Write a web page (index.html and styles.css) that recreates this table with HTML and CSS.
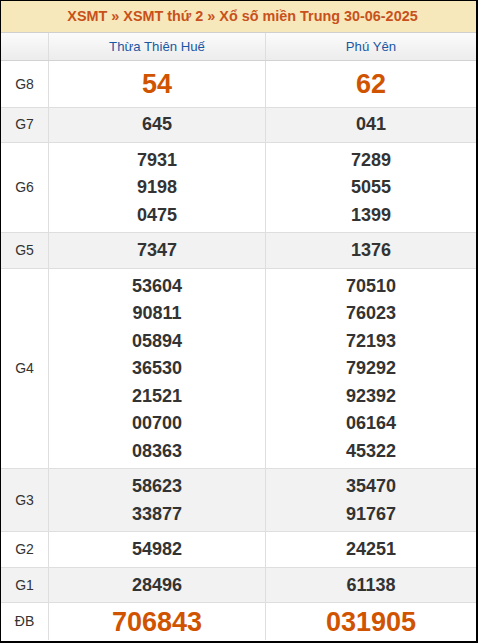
FILE: index.html
```html
<!DOCTYPE html>
<html lang="vi">
<head>
<meta charset="utf-8">
<title>XSMT 30-06-2025</title>
<link rel="stylesheet" href="styles.css">
</head>
<body>
<div class="wrap">
  <div class="title">XSMT » XSMT thứ 2 » Xổ số miền Trung 30-06-2025</div>
  <table class="kq">
    <thead>
      <tr><th class="lbl"></th><th>Thừa Thiên Huế</th><th>Phú Yên</th></tr>
    </thead>
    <tbody>
      <tr class="g8"><td class="lbl">G8</td><td class="big">54</td><td class="big">62</td></tr>
      <tr class="alt g7"><td class="lbl">G7</td><td>645</td><td>041</td></tr>
      <tr><td class="lbl">G6</td><td><div>7931</div><div>9198</div><div>0475</div></td><td><div>7289</div><div>5055</div><div>1399</div></td></tr>
      <tr class="alt"><td class="lbl">G5</td><td>7347</td><td>1376</td></tr>
      <tr><td class="lbl">G4</td><td><div>53604</div><div>90811</div><div>05894</div><div>36530</div><div>21521</div><div>00700</div><div>08363</div></td><td><div>70510</div><div>76023</div><div>72193</div><div>79292</div><div>92392</div><div>06164</div><div>45322</div></td></tr>
      <tr class="alt"><td class="lbl">G3</td><td><div>58623</div><div>33877</div></td><td><div>35470</div><div>91767</div></td></tr>
      <tr><td class="lbl">G2</td><td>54982</td><td>24251</td></tr>
      <tr class="alt"><td class="lbl">G1</td><td>28496</td><td>61138</td></tr>
      <tr class="db"><td class="lbl">ĐB</td><td class="big">706843</td><td class="big">031905</td></tr>
    </tbody>
  </table>
</div>
</body>
</html>
```
FILE: styles.css
```css
html, body {
  margin: 0;
  padding: 0;
  background: #000;
}
body {
  font-family: "Liberation Sans", Arial, sans-serif;
  width: 478px;
  height: 643px;
  overflow: hidden;
}
.wrap {
  margin: 1px 2px 2px 1px;
  width: 475px;
  height: 640px;
  background: #fff;
}
.title {
  box-sizing: border-box;
  height: 32px;
  line-height: 31px;
  padding-left: 8px;
  background: #f6e8bb;
  border-bottom: 1px solid #cfcfcf;
  text-align: center;
  font-weight: bold;
  font-size: 14.4px;
  color: #c8511b;
}
.kq {
  width: 475px;
  border-collapse: collapse;
  table-layout: fixed;
}
.kq th, .kq td {
  border: 1px solid #dedede;
  text-align: center;
  padding: 4px 0 3px;
  font-size: 18px;
  font-weight: bold;
  color: #333;
  line-height: 27.5px;
}
.kq tr > :first-child { border-left: none; }
.kq tr > :last-child { border-right: none; }
.kq thead th {
  border-top: none;
  height: 27px;
  padding: 0;
  line-height: 27px;
  font-size: 13.2px;
  font-weight: normal;
  color: #1a57a3;
  background: linear-gradient(#fbfbfb, #ececec);
  border-bottom: 1px solid #d2d2d2;
}
.kq th.lbl { width: 47px; }
.kq thead th:nth-child(2) { width: 216px; }
.kq td.lbl {
  font-size: 14px;
  font-weight: normal;
  color: #333;
}
.kq tr.alt td { background: #f2f2f2; }
.kq tr.g7 td { padding: 3px 0 3px; }
.kq td.big {
  font-size: 27px;
  color: #d05400;
  line-height: 39px;
}
.kq tr.db td.big { line-height: 30px; }
.kq tbody tr:last-child td { border-bottom: none; }
```
